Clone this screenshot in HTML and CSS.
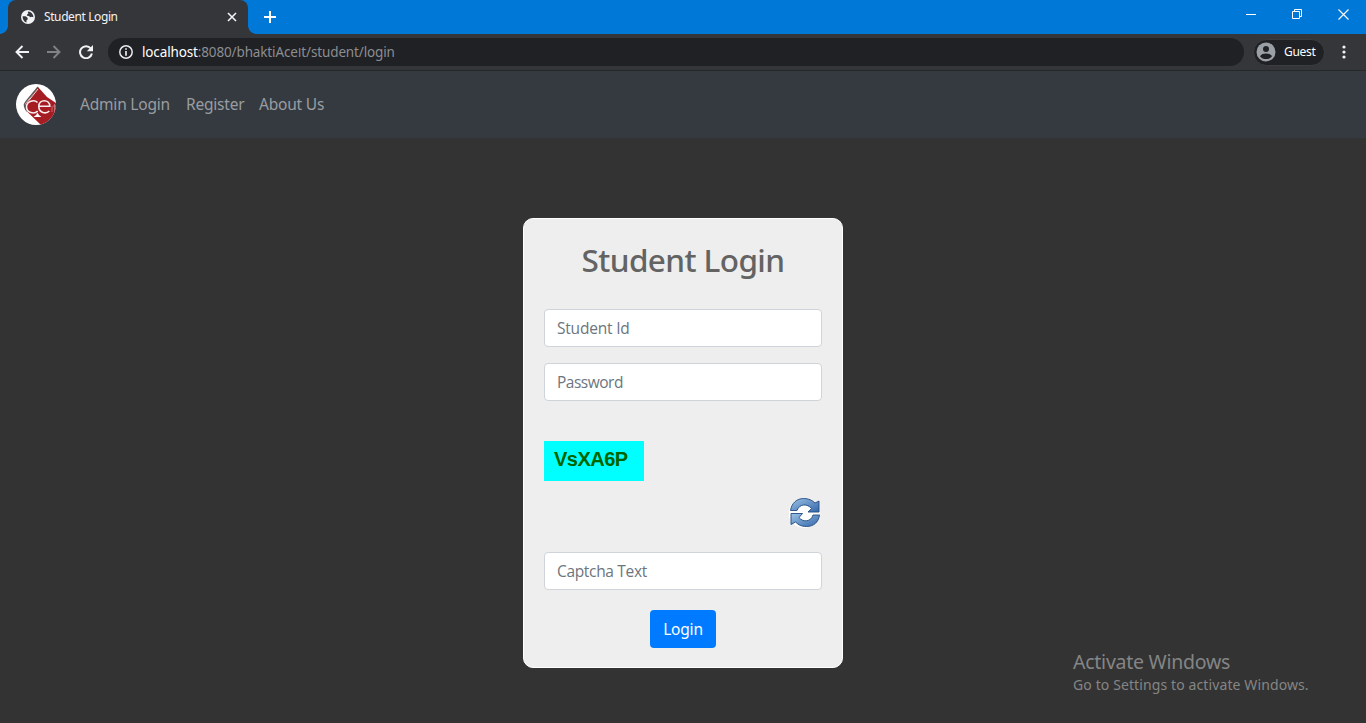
FILE: index.html
```html
<!DOCTYPE html>
<html lang="en">
<head>
<meta charset="utf-8">
<title>Student Login</title>
<link rel="stylesheet" href="styles.css">
</head>
<body>
<header class="tabstrip">
  <div class="tab">
    <svg class="globe" width="14" height="14" viewBox="0 0 14 14"><circle cx="7" cy="7" r="7" fill="#f1f3f4"/><path d="M1.600 6.200l3 .1 1.900 1.400.3 1.600-1.300.9v2.200C3 11.700 1.500 9.500 1.600 6.200zM7.300 1.600c-.8.5-.5 1.300.2 1.600l-1.400 1.200-.2 1.300 1.900.3 1.700 1.200 1.300-.4 1.600.4c-.1-2.900-2.200-5.300-5.100-5.600z" fill="#35363a"/></svg>
    <span class="tab-title">Student Login</span>
    <svg class="tab-close" width="10" height="10" viewBox="0 0 10 10"><path d="M1 1l8 8M9 1L1 9" stroke="#f1f3f4" stroke-width="1.600"/></svg>
  </div>
  <svg class="new-tab" width="12" height="12" viewBox="0 0 12 12"><path d="M6 0v12M0 6h12" stroke="#fff" stroke-width="2"/></svg>
  <div class="window-controls">
    <svg width="11" height="11" viewBox="0 0 11 11"><path d="M0 5.500h10" stroke="#fff"/></svg>
    <svg width="11" height="11" viewBox="0 0 11 11" fill="none" stroke="#fff"><path d="M.5 2.500h7v7h-7zM2.500 2.500v-2h7v7h-2"/></svg>
    <svg width="11" height="11" viewBox="0 0 11 11"><path d="M.5.5l10 10M10.500.5l-10 10" stroke="#fff" stroke-width="1.100"/></svg>
  </div>
</header>
<div class="toolbar">
  <div class="nav-icons">
    <svg width="14" height="14" viewBox="0 0 14 14" fill="none" stroke="#f1f3f4" stroke-width="1.900"><path d="M14 7H1.500M7.500 1l-6 6 6 6"/></svg>
    <svg width="14" height="14" viewBox="0 0 14 14" fill="none" stroke="#818285" stroke-width="1.900"><path d="M0 7h12.500M6.500 1l6 6-6 6"/></svg>
    <svg width="14" height="14" viewBox="0 0 14 14"><path d="M11.800 3.500A6 6 0 1 0 12.900 8.500" fill="none" stroke="#f1f3f4" stroke-width="2"/><path d="M14 0v6.200H7.800z" fill="#f1f3f4"/></svg>
  </div>
  <div class="address">
    <svg width="14" height="14" viewBox="0 0 14 14"><circle cx="7" cy="7" r="6.200" fill="none" stroke="#e8eaed" stroke-width="1.500"/><path d="M7 3.200v1.600M7 6v4.700" stroke="#e8eaed" stroke-width="1.700"/></svg>
    <span class="url"><span class="host">localhost</span><span class="path">:8080/bhaktiAce<span class="plain">I</span>t/student/login</span></span>
  </div>
  <div class="guest">
    <svg width="20" height="20" viewBox="0 0 20 20"><circle cx="10" cy="10" r="9.500" fill="#9aa0a6"/><circle cx="10" cy="7" r="3" fill="#202124"/><path d="M4 14.200c1.300-2 3.500-2.700 6-2.700s4.700.7 6 2.700c-1.400 1.900-3.600 2.900-6 2.900s-4.600-1-6-2.900z" fill="#202124"/></svg>
    <span class="guest-name">Guest</span>
  </div>
  <svg class="menu" width="4" height="14" viewBox="0 0 4 14" fill="#f1f3f4"><circle cx="2" cy="2" r="1.600"/><circle cx="2" cy="7" r="1.600"/><circle cx="2" cy="12" r="1.600"/></svg>
</div>
<nav class="navbar">
  <svg class="brand" width="40" height="41" viewBox="0 0 40 41">
    <defs><clipPath id="disc"><ellipse cx="20" cy="20.500" rx="20" ry="20.500"/></clipPath></defs>
    <g clip-path="url(#disc)">
      <rect width="40" height="41" fill="#fff"/>
      <path d="M22 3L31 13 40 19V41H25L11 27.500C8 24 8.500 20 11.500 17.500z" fill="#a51c22"/>
      <path d="M22 3L10 17.500c-3 3-1.500 7.500 1.500 10" fill="none" stroke="#5d5759" stroke-width="1.200"/>
      <path d="M22 5L12.500 17" fill="none" stroke="#e9d6d6"/>
      <g fill="none" stroke="#f8eeee" stroke-width="1.600"><path d="M21.500 18.500c-3-3.200-11-1.800-11 4.300s7.800 8 11.200 4.200"/><path d="M22.800 22.300h11c0-7.500-11-7.500-11 0 0 6.800 7.300 8 10.500 4.700"/></g>
      <path d="M21.500 28.500q1 3 4 4.500h-8q3-1.500 4-4.500z" fill="#fff"/>
      <path d="M36 22v6M38.500 20v8M37 22h3" stroke="#cf8285" stroke-width=".8"/>
    </g>
  </svg>
  <a class="nav-link admin">Admin Login</a>
  <a class="nav-link register">Register</a>
  <a class="nav-link about">About Us</a>
</nav>
<main class="page">
  <form class="card">
    <h2 class="heading">Student Login</h2>
    <input class="field student" type="text" placeholder="Student Id">
    <input class="field password" type="password" placeholder="Password">
    <div class="captcha">VsXA6P</div>
    <svg class="refresh" width="32" height="32" viewBox="0 0 32 32">
      <defs><linearGradient id="blue" x2="1" y2="1"><stop stop-color="#9cc3e5"/><stop offset="1" stop-color="#3467aa"/></linearGradient></defs>
      <ellipse cx="15" cy="16" rx="15.500" ry="15" fill="#fff" opacity=".9"/>
      <path d="M1.500 13.500C2.500 6 8 1.500 14.500 1.500c5 0 8.500 1.500 11.500 4.500L30 4v11H19l3.500-3.500C18.500 6.500 10.500 6.500 8 13.500z" fill="url(#blue)" stroke="#234b80" stroke-width=".9"/>
      <path d="M30.500 18C29.500 25.500 24.500 29.500 17.500 29.500c-5 0-8-1.500-11-4.500L2 27.500V16.500h11.500L10 20.500c4 5 12 4.500 14-2.500z" fill="url(#blue)" stroke="#234b80" stroke-width=".9"/>
    </svg>
    <input class="field captcha-text" type="text" placeholder="Captcha Text">
    <button class="submit" type="button">Login</button>
  </form>
  <aside class="activation">
    <div class="activation-title">Activate Windows</div>
    <div class="activation-text">Go to Settings to activate Windows.</div>
  </aside>
</main>
</body>
</html>
```
FILE: styles.css
```css
* { box-sizing: border-box; }
body { margin: 0; height: 723px; overflow: hidden; display: flex; flex-direction: column; background: #333; font-family: "Noto Sans", "Open Sans", sans-serif; font-size: 16px; line-height: 24px; }
svg { display: block; flex: none; }
.tabstrip { height: 34px; background: #0078d7; display: flex; padding-left: 8px; }
.tab { position: relative; width: 240px; background: #35363a; border-radius: 8px 8px 0 0; display: flex; align-items: center; padding: 0 11px 0 13px; color: #f1f3f4; }
.tab::before, .tab::after { content: ""; position: absolute; bottom: 0; width: 8px; height: 8px; }
.tab::before { left: -8px; background: radial-gradient(circle at 0 0, transparent 7.5px, #35363a 8px); }
.tab::after { right: -8px; background: radial-gradient(circle at 100% 0, transparent 7.5px, #35363a 8px); }
.tab-title { margin-left: 9px; font-size: 12px; letter-spacing: -.4px; flex: 1; }
.new-tab { margin: 11px 0 0 16px; }
.window-controls { margin: 9px 17px 0 auto; display: flex; gap: 35px; }
.toolbar { height: 37px; background: #35363a; border-bottom: 1px solid #262729; display: flex; align-items: center; padding: 0 20px 0 15px; }
.nav-icons { display: flex; gap: 18px; }
.address { margin-left: 15px; width: 1136px; height: 28px; border-radius: 14px; background: #202124; display: flex; align-items: center; gap: 9px; padding-left: 11px; }
.url { font-size: 13.5px; letter-spacing: -.14px; line-height: 20px; }
.host { color: #fff; }
.path { color: #8b8e92; }
.plain { font-family: "Open Sans", sans-serif; }
.guest { margin-left: 9px; width: 72px; height: 27px; border-radius: 14px; background: #202124; border: 1px solid #3c3d41; display: flex; align-items: center; padding-left: 2px; gap: 8px; color: #fff; font-size: 12px; letter-spacing: -.3px; }
.menu { margin-left: auto; }
.navbar { height: 67px; background: #343a40; display: flex; align-items: center; padding-left: 16px; }
.nav-link { color: #9a9da0; white-space: nowrap; font-size: 15.5px; letter-spacing: -.2px; padding-bottom: 2px; }
.admin { margin-left: 24px; width: 106px; }
.register { width: 73px; }
.about { width: 80px; }
.page { flex: 1; position: relative; display: flex; justify-content: center; align-items: flex-start; padding-top: 80px; }
.card { width: 320px; height: 450px; background: #eee; border: 1px solid #fff; border-radius: 10px; padding: 20px; display: flex; flex-direction: column; }
.heading { margin: 1px 0 32px; color: #636363; font-size: 31.5px; font-weight: 500; line-height: 40px; height: 37px; text-align: center; letter-spacing: -.6px; }
.field { flex: none; width: 278px; height: 38px; margin: 0; padding: 6px 12px; border: 1px solid #ced4da; border-radius: 4px; background: #fff; font-family: "Open Sans", sans-serif; font-size: 15.5px; letter-spacing: -.2px; }
.field::placeholder { color: #6c757d; opacity: 1; }
.student { margin-bottom: 16px; }
.password { margin-bottom: 40px; letter-spacing: -.5px; }
.captcha-text { letter-spacing: -.33px; }
.captcha { flex: none; width: 100px; height: 40px; background: #0ff; color: #006400; font: bold 20px/36px "Liberation Sans", Arial, sans-serif; letter-spacing: -.5px; padding-left: 10px; }
.refresh { align-self: flex-end; margin: 16px 1px 23px 0; }
.submit { align-self: center; flex: none; margin-top: 20px; width: 66px; height: 38px; border: 0; border-radius: 4px; background: #007bff; color: #fff; font-family: inherit; font-size: 15.5px; letter-spacing: -.2px; padding: 0; }
.activation { position: absolute; left: 1073px; top: 511px; color: #858585; white-space: nowrap; }
.activation-title { font-size: 19.5px; line-height: 26px; letter-spacing: -.25px; }
.activation-text { font-size: 14px; line-height: 20px; letter-spacing: .11px; }
```
